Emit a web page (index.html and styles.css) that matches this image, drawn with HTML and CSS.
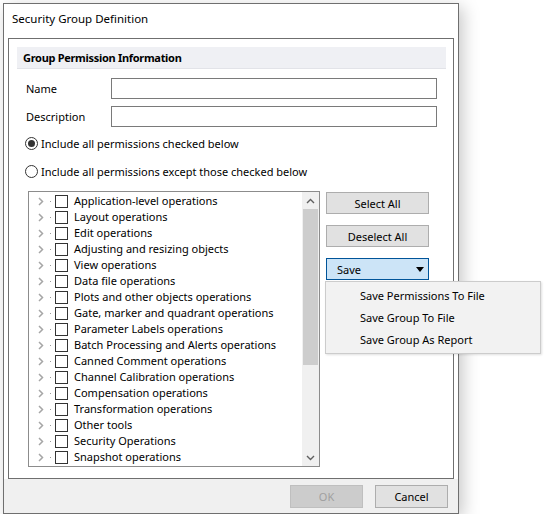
FILE: index.html
```html
<!DOCTYPE html>
<html lang="en">
<head>
  <meta charset="UTF-8">
  <title>Security Group Definition</title>
  <link rel="stylesheet" href="styles.css">
</head>
<body>

  <div class="window">
    <div class="titlebar">Security Group Definition</div>

    <div class="panel">
      <div class="panel-head">Group Permission Information</div>

      <div class="fields">
        <label>Name</label>
        <input type="text">
        <label>Description</label>
        <input type="text">
      </div>

      <div class="radio-row">
        <span class="radio checked"></span>
        <span>Include all permissions checked below</span>
      </div>
      <div class="radio-row second">
        <span class="radio"></span>
        <span>Include all permissions except those checked below</span>
      </div>

      <div class="perm-area">
        <div class="tree">
          <ul class="tree-list" id="treeList"></ul>
          <div class="vscroll">
            <div class="sb-btn">
              <svg width="9" height="6" viewBox="0 0 9 6"><path d="M1 5l3.5-3.5L8 5" fill="none" stroke="#606060" stroke-width="1.4"/></svg>
            </div>
            <div class="sb-thumb"></div>
            <div class="sb-track"></div>
            <div class="sb-btn">
              <svg width="9" height="6" viewBox="0 0 9 6"><path d="M1 1l3.5 3.5L8 1" fill="none" stroke="#606060" stroke-width="1.4"/></svg>
            </div>
          </div>
        </div>

        <div class="actions">
          <button class="btn">Select All</button>
          <button class="btn">Deselect All</button>
          <div class="split">
            <button class="btn save">
              <span>Save</span>
              <svg width="8" height="5" viewBox="0 0 8 5"><path d="M0 0h8L4 5z" fill="#000"/></svg>
            </button>
            <ul class="menu">
              <li>Save Permissions To File</li>
              <li>Save Group To File</li>
              <li>Save Group As Report</li>
            </ul>
          </div>
        </div>
      </div>
    </div>

    <div class="footer">
      <button class="btn ok" disabled>OK</button>
      <button class="btn">Cancel</button>
    </div>
  </div>

  <script>
    const groups = [
      'Application-level operations',
      'Layout operations',
      'Edit operations',
      'Adjusting and resizing objects',
      'View operations',
      'Data file operations',
      'Plots and other objects operations',
      'Gate, marker and quadrant operations',
      'Parameter Labels operations',
      'Batch Processing and Alerts operations',
      'Canned Comment operations',
      'Channel Calibration operations',
      'Compensation operations',
      'Transformation operations',
      'Other tools',
      'Security Operations',
      'Snapshot operations'
    ];

    const treeList = document.getElementById('treeList');
    groups.forEach((name) => {
      const li = document.createElement('li');
      li.className = 'tree-row';
      li.innerHTML = `
        <svg class="expander" width="6" height="9" viewBox="0 0 6 9"><path d="M1 1l3.5 3.5L1 8" fill="none" stroke="#a6a6a6" stroke-width="1.5"/></svg>
        <span class="tree-dot"></span>
        <span class="check"></span>
        <span class="tree-label">${name}</span>
      `;
      treeList.appendChild(li);
    });
  </script>

</body>
</html>
```

FILE: styles.css
```css
body {
  margin: 0;
  padding: 3px 0 0 3px;
  background: #ffffff;
  font-family: 'Noto Sans', 'Open Sans', sans-serif;
  font-size: 11px;
  color: #000;
}

.window {
  width: 454px;
  height: 509px;
  border: 1px solid #6f6f6f;
  background: #ffffff;
  display: flex;
  flex-direction: column;
  box-shadow: 4px 4px 16px rgba(0, 0, 0, 0.22);
}

.titlebar {
  height: 34px;
  box-sizing: border-box;
  padding: 7px 0 0 8px;
  line-height: 16px;
  font-size: 11.5px;
}

.panel {
  flex: 1;
  margin: 0 4px;
  border: 1px solid #6f6f6f;
  padding: 8px 7px 0 8px;
}

.panel-head {
  height: 21px;
  line-height: 21px;
  background: #eff0f4;
  border-bottom: 1px solid #e2e3e8;
  padding-left: 6px;
  font-weight: bold;
  letter-spacing: -0.3px;
}

.fields {
  display: grid;
  grid-template-columns: 85px 326px;
  row-gap: 7px;
  align-items: center;
  margin-top: 9px;
  padding-left: 9px;
}

.fields input {
  height: 21px;
  box-sizing: border-box;
  border: 1px solid #7a7a7a;
  margin: 0;
  padding: 0 4px;
  font: inherit;
}

.radio-row {
  display: flex;
  align-items: center;
  height: 16px;
  margin-top: 8px;
  padding-left: 8px;
  gap: 3px;
}

.radio-row.second {
  margin-top: 12px;
}

.radio {
  width: 13px;
  height: 13px;
  box-sizing: border-box;
  border: 1px solid #333;
  border-radius: 50%;
  position: relative;
}

.radio.checked::after {
  content: '';
  position: absolute;
  left: 2px;
  top: 2px;
  width: 7px;
  height: 7px;
  border-radius: 50%;
  background: #333;
}

.perm-area {
  display: flex;
  margin-top: 12px;
  padding-left: 11px;
  gap: 6px;
}

.tree {
  width: 292px;
  height: 276px;
  box-sizing: border-box;
  border: 1px solid #8c8c8c;
  display: flex;
}

.tree-list {
  flex: 1;
  list-style: none;
  margin: 0;
  padding: 1px 0 0 0;
  overflow: hidden;
}

.tree-row {
  display: flex;
  align-items: center;
  height: 16px;
  white-space: nowrap;
}

.expander {
  margin-left: 9px;
}

.tree-dot {
  width: 1px;
  height: 1px;
  background: #9a9a9a;
  margin-left: 6px;
}

.check {
  width: 13px;
  height: 13px;
  box-sizing: border-box;
  border: 1px solid #333;
  margin-left: 4px;
}

.tree-label {
  margin-left: 6px;
  line-height: 14px;
  margin-bottom: 1px;
}

.vscroll {
  width: 17px;
  display: flex;
  flex-direction: column;
  background: #f0f0f0;
}

.sb-btn {
  height: 17px;
  display: flex;
  align-items: center;
  justify-content: center;
}

.sb-thumb {
  height: 156px;
  margin: 0 1px;
  background: #cdcdcd;
}

.sb-track {
  flex: 1;
}

.actions {
  display: flex;
  flex-direction: column;
  gap: 11px;
  margin-top: 1px;
}

.btn {
  width: 103px;
  height: 22px;
  box-sizing: border-box;
  border: 1px solid #adadad;
  background: #e1e1e1;
  font: inherit;
  color: #000;
  padding: 0;
  margin: 0;
}

.split {
  position: relative;
}

.save {
  display: flex;
  align-items: center;
  justify-content: space-between;
  padding: 0 4px 0 10px;
  background: #cce4f7;
  border-color: #005499;
}

.menu {
  position: absolute;
  left: -1px;
  top: 23px;
  width: 216px;
  box-sizing: border-box;
  margin: 0;
  padding: 3px 0 2px;
  list-style: none;
  background: #f2f2f2;
  border: 1px solid #cccccc;
  box-shadow: 1px 1px 2px rgba(0, 0, 0, 0.12);
}

.menu li {
  height: 22px;
  line-height: 22px;
  padding-left: 34px;
}

.footer {
  height: 34px;
  box-sizing: border-box;
  background: #f0f0f0;
  display: flex;
  justify-content: flex-end;
  gap: 12px;
  padding: 6px 10px 0 0;
}

.footer .btn {
  width: 73px;
  height: 23px;
}

.btn.ok {
  background: #cccccc;
  border-color: #bfbfbf;
  color: #a0a0a0;
}
```
